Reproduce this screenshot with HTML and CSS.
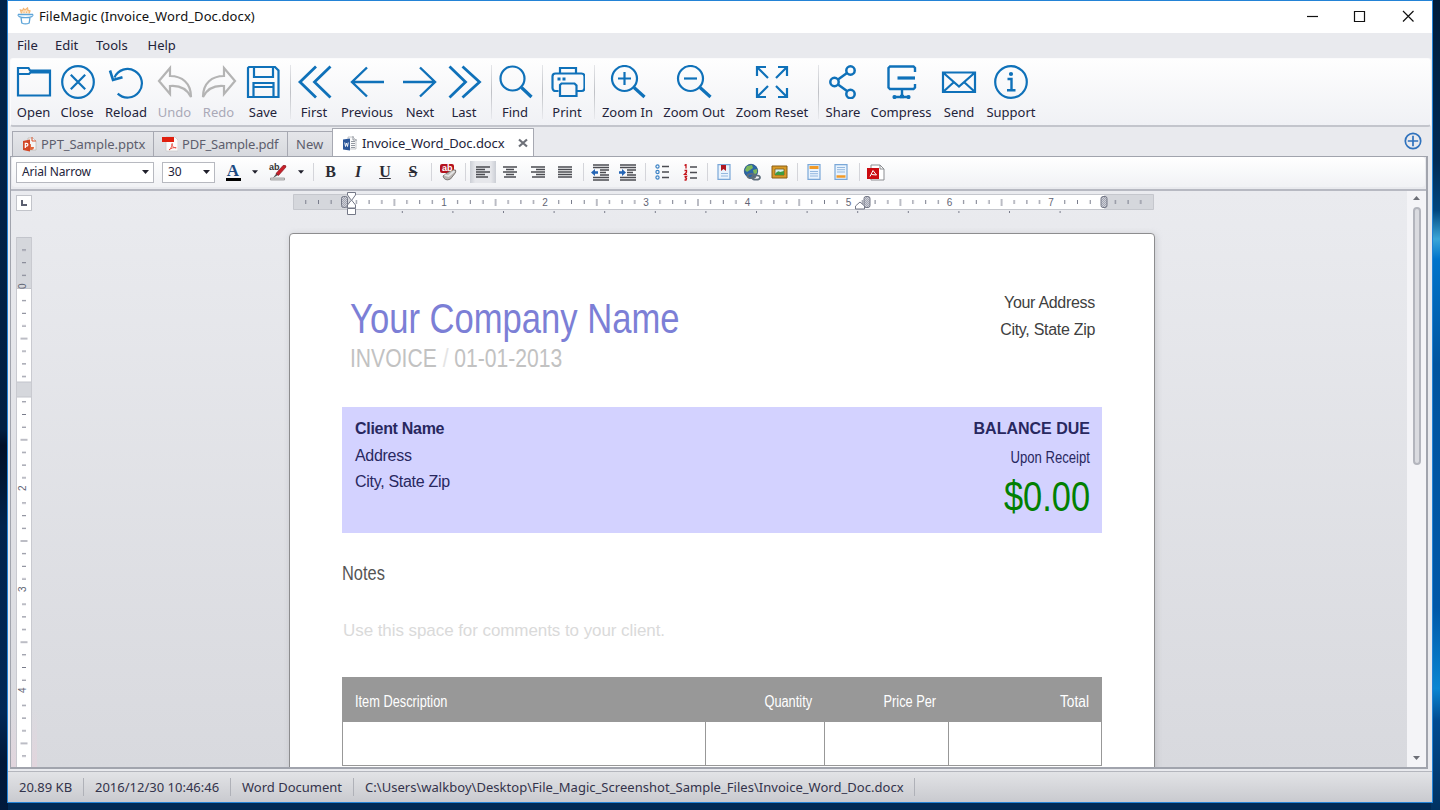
FILE: index.html
```html
<!DOCTYPE html>
<html lang="en">
<head>
<meta charset="utf-8">
<title>FileMagic</title>
<link rel="stylesheet" href="styles.css">
</head>
<body>
<svg width="0" height="0" class="defs">
  <defs>
    <symbol id="sheet-ppt" viewBox="0 0 16 16"><path d="M6 2h5l3 3v9H6z" fill="#f4f4f4" stroke="#b9b4b0" stroke-width=".7"/><path d="M10 1v4h4" fill="none" stroke="#d9532c"/><path d="M9 8a3 3 0 1 0 3 3H9z" fill="#e0663c"/><path d="M1 5l7-1.500v12L1 14z" fill="#d24726"/><path d="M3.300 12V7.300h1.200a1.400 1.400 0 0 1 0 2.800H3.300" fill="none" stroke="#fff" stroke-width="1.200"/></symbol>
    <symbol id="sheet-pdf" viewBox="0 0 16 16"><path d="M4 1h9l3 3v11H4z" fill="#fbfbfb" stroke="#c9c9c9" stroke-width=".7"/><path d="M0 1h12v5H0z" fill="#e0200f"/><path d="M7 14c2-1.500 3.500-4.500 3.200-6.500-1.200 2 1.200 4.500 4 4.300-2.500-.7-5 .3-7.200 2.200z" fill="none" stroke="#e8463a" stroke-width=".9"/></symbol>
    <symbol id="sheet-doc" viewBox="0 0 16 16"><path d="M6 2h5l3 3v9H6z" fill="#fafafa" stroke="#a9adb3" stroke-width=".7"/><path d="M11 1v4h4M9 6.500h4M9 8.500h4M9 10.500h4M9 12.500h4" fill="none" stroke="#9499a1"/><path d="M1 4.500l7-1v12l-7-1z" fill="#2b579a"/><path d="M2.700 7.500l.8 4 1-3.500 1 3.500.8-4" fill="none" stroke="#fff" stroke-width=".9"/></symbol>
    <symbol id="caret" viewBox="0 0 7 4"><path d="M0 0h7L3.500 4z" fill="#1f1f2b"/></symbol>
  </defs>
</svg>
<div class="window">
  <header class="titlebar">
    <svg class="logo" width="17" height="18" viewBox="0 0 17 18" fill="none"><path d="M4.500 6.500L3.500 3l2 .7L6.500 1.500 8 3l2.500-2 .5 2.500 2 .5-1 2.500" fill="#fde3c4" stroke="#f5b877" stroke-width="1.300"/><path d="M7 6V4.500M9.500 6V4.500" stroke="#f5b877"/><path d="M1 7.500h15M2 9.500c3 1.500 10 1.500 13 0M4 10.500l.8 5.500c2 1 5.400 1 7.400 0l.8-5.500" stroke="#5ea5d9" stroke-width="1.300"/><path d="M1 7.500v1.300l1.500 1M16 7.500v1.300l-1.500 1" stroke="#5ea5d9"/></svg>
    <span class="title">FileMagic (Invoice_Word_Doc.docx)</span>
    <svg class="controls" width="108" height="14" viewBox="0 0 108 14" fill="none" stroke="#111" stroke-width="1.200"><path d="M0 7.500h11"/><path d="M47.500 2.500H57.500v10H47.500z"/><path d="M96 2l10.500 10.500M106.500 2L96 12.500"/></svg>
  </header>
  <nav class="menu"><span>File</span><span>Edit</span><span>Tools</span><span>Help</span></nav>

  <div class="toolbar">
    <div class="tool"><svg width="36" height="34" viewBox="0 0 36 34"><path d="M2 30.500V3h10.500l1.500 2.500h20v25zM2 9h11l1.500-1.500H34"/></svg><span>Open</span></div>
    <div class="tool"><svg width="36" height="34" viewBox="0 0 36 34"><circle cx="19" cy="17" r="15.800"/><path d="M11.800 9.800l14.400 14.400M26.200 9.800L11.800 24.200"/></svg><span>Close</span></div>
    <div class="tool"><svg width="36" height="34" viewBox="0 0 36 34"><path d="M9.700 28.600A14.300 14.300 0 1 0 6.500 12.500"/><path d="M2 5.500l3 9.500 9.500-2.800" stroke-width="2.600"/></svg><span>Reload</span></div>
    <div class="tool off"><svg width="36" height="34" viewBox="0 0 36 34"><path d="M2 16L13 3v8c12 0 21 7 21 21-4-8-10-12-21-11v8z"/></svg><span>Undo</span></div>
    <div class="tool off"><svg width="36" height="34" viewBox="0 0 36 34"><path d="M34 16L23 3v8C11 11 2 18 2 32c4-8 10-12 21-11v8z"/></svg><span>Redo</span></div>
    <div class="tool"><svg width="36" height="34" viewBox="0 0 36 34"><path d="M4 2h26l3.500 3.500V32H3V3zM9 2v10h19V2M8.500 32V18h20v14M9 22h19"/></svg><span>Save</span></div>
    <i class="rule"></i>
    <div class="tool"><svg width="36" height="34" viewBox="0 0 36 34"><path d="M20 1.500L4 17l16 15.500M34.500 1.500L18.500 17l16 15.500" stroke-width="2.800"/></svg><span>First</span></div>
    <div class="tool"><svg width="36" height="34" viewBox="0 0 36 34"><path d="M18 2.500L3 17l15 14.500M3 17h32" stroke-width="2.400"/></svg><span>Previous</span></div>
    <div class="tool"><svg width="36" height="34" viewBox="0 0 36 34"><path d="M18 2.500L33 17 18 31.500M33 17H1" stroke-width="2.400"/></svg><span>Next</span></div>
    <div class="tool"><svg width="36" height="34" viewBox="0 0 36 34"><path d="M3.500 1.500L19.500 17l-16 15.500M16.500 1.500L33.500 17l-17 15.500" stroke-width="2.800"/></svg><span>Last</span></div>
    <i class="rule"></i>
    <div class="tool"><svg width="36" height="34" viewBox="0 0 36 34"><circle cx="15.500" cy="13.500" r="12"/><path d="M24.500 22.500l10 9.500" stroke-width="3.200"/></svg><span>Find</span></div>
    <i class="rule"></i>
    <div class="tool"><svg width="36" height="34" viewBox="0 0 36 34"><path d="M11 8.500V3h16v5.500M9.500 26H6.500a3 3 0 0 1-3-3V11.500a3 3 0 0 1 3-3h26a3 3 0 0 1 3 3V23a3 3 0 0 1-3 3H28M12.500 18.500h13l2 2v10.500H11V20z"/><path d="M8.500 14h3M13.500 14h3" stroke-width="3"/></svg><span>Print</span></div>
    <i class="rule"></i>
    <div class="tool"><svg width="36" height="34" viewBox="0 0 36 34"><circle cx="14.500" cy="13.500" r="12.500"/><path d="M8 13.500h13M14.500 7v13"/><path d="M24 22.500l10.500 9.500" stroke-width="3.200"/></svg><span>Zoom In</span></div>
    <div class="tool"><svg width="36" height="34" viewBox="0 0 36 34"><circle cx="14.500" cy="13.500" r="12.500"/><path d="M8 13.500h13"/><path d="M24 22.500l10.500 9.500" stroke-width="3.200"/></svg><span>Zoom Out</span></div>
    <div class="tool"><svg width="36" height="34" viewBox="0 0 36 34"><path d="M3 11V2h9M3 2l11 11M24 2h9v9M33 2L22 13M3 23v9h9M3 32l11-11M24 32h9v-9M33 32L22 21"/></svg><span>Zoom Reset</span></div>
    <i class="rule"></i>
    <div class="tool"><svg width="36" height="34" viewBox="0 0 36 34"><g stroke-width="2.500"><circle cx="9.500" cy="17" r="4.200"/><circle cx="25.500" cy="5.500" r="4.200"/><circle cx="25.500" cy="29" r="4.200"/><path d="M13 14.500l9-6.500M13 19.500l9 6.500"/></g></svg><span>Share</span></div>
    <div class="tool"><svg width="36" height="34" viewBox="0 0 36 34"><path d="M32 7V3l-1.500-1.500H7L5.500 3v19.500L7 24h23.500l1.500-1.500V19M19 24v7.500M10 32h17" stroke-width="2.400"/><path d="M14.500 13H32" stroke-width="3.200"/><circle cx="11.500" cy="32" r="1"/><circle cx="25.500" cy="32" r="1"/><path d="M17 31.500h4" stroke-width="3.400"/></svg><span>Compress</span></div>
    <div class="tool"><svg width="36" height="34" viewBox="0 0 36 34"><path d="M2 7.500h32v19.500H2zM2 7.500l16 14 16-14M2 27l11-10M34 27L23 17"/></svg><span>Send</span></div>
    <div class="tool"><svg width="36" height="34" viewBox="0 0 36 34"><circle cx="18" cy="17" r="15.800"/><path d="M14.500 14h4V25M14 25.200h8.500" stroke-width="2.400"/><circle cx="18" cy="9" r="1" stroke-width="2.200"/></svg><span>Support</span></div>
  </div>

  <div class="tabs">
    <div class="tab ppt"><svg width="16" height="16"><use href="#sheet-ppt"/></svg><span>PPT_Sample.pptx</span></div>
    <div class="tab pdf"><svg width="16" height="16"><use href="#sheet-pdf"/></svg><span>PDF_Sample.pdf</span></div>
    <div class="tab new"><span>New</span></div>
    <div class="tab active"><svg width="16" height="16"><use href="#sheet-doc"/></svg><span>Invoice_Word_Doc.docx</span><svg class="x" width="10" height="10" viewBox="0 0 10 10"><path d="M1 1.500l8 7M9 1.500l-8 7" stroke="#6d7078" stroke-width="2.200"/></svg></div>
    <svg class="add" width="18" height="18" viewBox="0 0 18 18" fill="none" stroke="#2f72bd" stroke-width="1.700"><circle cx="9" cy="9" r="7.700"/><path d="M3.800 9h10.400M9 3.800v10.400"/></svg>
  </div>

  <div class="panel">
    <div class="format">
      <div class="select font"><span>Arial Narrow</span><svg width="7" height="4"><use href="#caret"/></svg></div>
      <div class="select size"><span>30</span><svg width="7" height="4"><use href="#caret"/></svg></div>
      <div class="icons">
        <b class="glyph color">A</b>
        <svg width="6" height="4"><use href="#caret"/></svg>
        <span class="mark"><svg width="18" height="18" viewBox="0 0 18 18"><path d="M1.500 15h14v2h-14z" fill="#d8d8d8" stroke="#888" stroke-width=".7"/><path d="M4 15l4-5.500 2 2z" fill="#555"/><path d="M7 10.500L14 2.500q3.500-.8 3 1.500l-7.500 8.500z" fill="#c8202a" stroke="#7d141b" stroke-width=".6"/></svg><small>ab</small></span>
        <svg width="6" height="4"><use href="#caret"/></svg>
        <i></i>
        <b class="glyph">B</b><b class="glyph it">I</b><b class="glyph un">U</b><b class="glyph st">S</b>
        <i></i>
        <span class="erase"><svg width="18" height="18" viewBox="0 0 18 18"><rect x="1" y="1" width="14" height="9" rx="2" fill="#b5121d"/><path d="M4 13l4-3q5-4 8.500-3 1 2-1 4l-4 5q-3 1.500-5 .5-2-1-2.500-3.500z" fill="#b9b5b2" stroke="#696461" stroke-width=".8"/><path d="M5.500 12l4 1 6-5" stroke="#e4e4e4" fill="none" stroke-width="1.800"/></svg><small>ab</small></span>
        <i></i>
        <span class="pressed"><svg width="14" height="12" viewBox="0 0 14 12"><path d="M0 1h14M0 3.500h9M0 6h14M0 8.500h9M0 11h12"/></svg></span>
        <svg width="14" height="12" viewBox="0 0 14 12"><path d="M0 1h14M3 3.500h8M0 6h14M3 8.500h8M1 11h12"/></svg>
        <svg width="14" height="12" viewBox="0 0 14 12"><path d="M0 1h14M5 3.500h9M0 6h14M5 8.500h9M1 11h13"/></svg>
        <svg width="14" height="12" viewBox="0 0 14 12"><path d="M0 1h14M0 3.500h14M0 6h14M0 8.500h14M0 11h14"/></svg>
        <i></i>
        <svg width="18" height="17" viewBox="0 0 18 17"><path d="M2 1h16M2 3.500h16M9 6h9M9 8.500h6M9 11h9M2 13.500h16M2 16h16"/><path d="M0 8.500l4-3.500v2.300h3v2.400H4V12z" fill="#2465b5" stroke="none"/></svg>
        <svg width="18" height="17" viewBox="0 0 18 17"><path d="M2 1h16M2 3.500h16M9 6h9M9 8.500h6M9 11h9M2 13.500h16M2 16h16"/><path d="M8 8.500L4 5v2.300H1v2.400h3V12z" fill="#2465b5" stroke="none"/></svg>
        <i></i>
        <svg width="14" height="16" viewBox="0 0 14 16"><path d="M7 2.500h7M7 8h7M7 13.500h7"/><g fill="none" stroke="#3d84c6" stroke-width="1.200"><circle cx="2.500" cy="2.500" r="1.600"/><circle cx="2.500" cy="8" r="1.600"/><circle cx="2.500" cy="13.500" r="1.600"/></g></svg>
        <svg width="14" height="17" viewBox="0 0 14 17"><path d="M7 3h7M7 8.500h7M7 14h7"/><path d="M1.500 1.500L3 .5v4M1.500 6.500h2v1.800l-2 2h2.500M1.500 12.500h2l-1 1.300 1 .7-.5 1.500H1.500" fill="none" stroke="#c5161d" stroke-width="1.300"/></svg>
        <i></i>
        <svg width="14" height="16" viewBox="0 0 14 16"><path d="M1 .7h12v14.600H1z" fill="#e9f3fd" stroke="#7aa7d8" stroke-width="1.200"/><path d="M4 1h5v6L6.500 5 4 7z" fill="#b01722" stroke="none"/><path d="M4 9.500h7M4 12h7" stroke="#94b8df" stroke-width="1"/></svg>
        <svg width="18" height="18" viewBox="0 0 18 18"><circle cx="8" cy="8" r="6.700" fill="#2b66a8" stroke="#23507e" stroke-width=".8"/><path d="M4 3l5-1 1 3-3 2-3 2-2-2zM10 7l4-1v4l-3 2z" fill="#7db85b" stroke="none"/><g fill="none" stroke="#5f6f7c" stroke-width="1.800"><ellipse cx="8.500" cy="13" rx="4" ry="2.200"/><ellipse cx="13" cy="14.500" rx="4" ry="2.200"/></g></svg>
        <svg width="17" height="14" viewBox="0 0 17 14"><path d="M1 1h15v12H1z" fill="#d89a26" stroke="#885d16" stroke-width="1"/><path d="M4 4h9v6H4z" fill="#d5f0ee" stroke="#7c591a" stroke-width=".8"/><path d="M4 9q3-4 5-2l4-1v4H4z" fill="#3e9b42" stroke="none"/></svg>
        <i></i>
        <svg width="14" height="16" viewBox="0 0 14 16"><path d="M1 .7h12v14.600H1z" fill="#e9f3fd" stroke="#7aa7d8" stroke-width="1.200"/><path d="M2.500 3.500h9" stroke="#f09a28" stroke-width="3"/><path d="M3 7.500h8M3 9.700h8M3 12h8" stroke="#94b8df" stroke-width="1"/></svg>
        <svg width="14" height="16" viewBox="0 0 14 16"><path d="M1 .7h12v14.600H1z" fill="#e9f3fd" stroke="#7aa7d8" stroke-width="1.200"/><path d="M2.500 12.500h9" stroke="#f09a28" stroke-width="2.500"/><path d="M3 3.500h8M3 5.700h8M3 8h8" stroke="#94b8df" stroke-width="1"/></svg>
        <i></i>
        <svg width="18" height="17" viewBox="0 0 18 17"><path d="M4 1h9l4 4v11H4z" fill="#fff" stroke="#8b8d91" stroke-width="1"/><path d="M13 1v4h4" fill="none" stroke="#8b8d91" stroke-width="1"/><path d="M0 4h12v11H0z" fill="#cb0a10" stroke="none"/><path d="M3 12.500l3-6 3.500 4.500-5-.5" fill="none" stroke="#fff" stroke-width="1"/></svg>
      </div>
    </div>

    <div class="viewport">
      <div class="left">
        <div class="tabstop"><svg width="6" height="6" viewBox="0 0 6 6"><path d="M1 0v5h5" fill="none" stroke="#5b5f70" stroke-width="2"/></svg></div>
        <svg class="vruler" width="16" height="530" viewBox="0 0 16 530">
          <defs><pattern id="vt" patternUnits="userSpaceOnUse" x="0" y="51" width="16" height="101.200"><path d="M6 12.600h4M6 25.300h4M6 38h4M4.500 50.600h7M6 63.200h4M6 75.900h4M6 88.500h4" stroke="#797c8b"/></pattern></defs>
          <path d="M0 0h16v530H0z" fill="#fff"/><path d="M.5.500h15v51H.5zM.5 145h15v15H.5z" fill="#d5d7dc" stroke="#c2c4cb"/>
          <path d="M0 6h16v139H0zM0 160h16v370H0z" fill="url(#vt)"/><path d="M.5 0v530M15.500 0v530" stroke="#c9cad0"/>
          <g class="num"><text transform="translate(10 52) rotate(-90)">0</text><text transform="translate(10 254) rotate(-90)">2</text><text transform="translate(10 355) rotate(-90)">3</text><text transform="translate(10 456) rotate(-90)">4</text></g>
        </svg>
      </div>
      <main class="canvas">
        <svg class="hruler" width="861" height="24" viewBox="0 0 861 24">
          <defs><pattern id="ht" patternUnits="userSpaceOnUse" x="50.800" y="0" width="101.200" height="24"><path d="M12.600 8v4M25.300 8v4M38 8v4M50.600 7v7M63.200 8v4M75.900 8v4M88.500 8v4" stroke="#797c8b"/></pattern>
          <pattern id="dots" patternUnits="userSpaceOnUse" x="84" y="0" width="50.600" height="24"><path d="M25.300 19v2" stroke="#797c8b"/></pattern>
          <pattern id="hatch" patternUnits="userSpaceOnUse" width="2" height="2"><path d="M0 0h2v2H0z" fill="#ced0d8"/><path d="M0 0h1v1H0zM1 1h1v1H1z" fill="#a3a6b2"/></pattern></defs>
          <path d="M.5 2.500h860v15H.5z" fill="#d5d7dc" stroke="#c5c7cd"/><path d="M57 3h754v14H57z" fill="#fff"/>
          <path d="M4 0h41v24H4zM62 0h799v18H62z" fill="url(#ht)"/><path d="M90 18h690v6H90z" fill="url(#dots)"/>
          <g class="num"><text x="151" y="14">1</text><text x="252" y="14">2</text><text x="353" y="14">3</text><text x="454.500" y="14">4</text><text x="555.500" y="14">5</text><text x="656.500" y="14">6</text><text x="758" y="14">7</text></g>
          <g stroke="#747887" stroke-width="1"><rect x="48.500" y="4.500" width="6" height="11" rx="2" fill="url(#hatch)"/><rect x="571" y="4.500" width="6" height="11" rx="2" fill="url(#hatch)"/><rect x="808" y="4.500" width="6" height="11" rx="2" fill="url(#hatch)"/>
          <g fill="#fff"><path d="M54.500.500h8V3l-4 5.500-4-5.500z"/><path d="M54.500 16v-3l4-5 4 5v3z"/><path d="M54.500 16.500h8v6h-8z"/><path d="M562.500 17v-3l4.500-4 4.500 4v3z"/></g></g>
        </svg>
        <article class="page">
          <section class="head">
            <div><h1 class="narrow">Your Company Name</h1><p class="sub narrow">INVOICE <em>/</em> 01-01-2013</p></div>
            <p class="addr">Your Address<br>City, State Zip</p>
          </section>
          <section class="client">
            <p class="who"><b>Client Name</b><br>Address<br>City, State Zip</p>
            <div class="due"><b>BALANCE DUE</b><span class="receipt narrow">Upon Receipt</span><span class="amount narrow">$0.00</span></div>
          </section>
          <h2 class="narrow">Notes</h2>
          <p class="note">Use this space for comments to your client.</p>
          <div class="table">
            <div class="th first"><span class="narrow">Item Description</span></div><div class="th"><span class="narrow">Quantity</span></div><div class="th"><span class="narrow">Price Per</span></div><div class="th total"><span class="narrow">Total</span></div>
            <div class="td"></div><div class="td"></div><div class="td"></div><div class="td"></div>
          </div>
        </article>
      </main>
      <div class="scroll"><svg width="7" height="4" viewBox="0 0 7 4"><path d="M0 4h7L3.500 0z" fill="#6c6e76"/></svg><div class="thumb"></div><svg class="down" width="7" height="4" viewBox="0 0 7 4"><path d="M0 0h7L3.500 4z" fill="#6c6e76"/></svg></div>
    </div>
  </div>

  <footer class="status"><span class="s1">20.89 KB</span><span class="s2">2016/12/30 10:46:46</span><span class="s3">Word Document</span><span class="s4">C:\Users\walkboy\Desktop\File_Magic_Screenshot_Sample_Files\Invoice_Word_Doc.docx</span></footer>
</div>
</body>
</html>
```
FILE: styles.css
```css
* { box-sizing: border-box; }
body {
  margin: 0; width: 1440px; height: 810px; overflow: hidden; padding-left: 7px;
  font: 13px/18px "Noto Sans", sans-serif; color: #23233a;
  background: linear-gradient(#00234a, #001f42 53%, #000f28 55%, #001733 59%, #00234d 65%, #002855 88%, #001838 94%, #001a3c) 0 0 / 8px 100% no-repeat,
    linear-gradient(#001c3a, #002b55 20%, #00467f 26%, #3aa6d8 29.500%, #0074cb 32%, #00549f 45%, #0058a8 75%, #0a86d2 85%, #004b91 89%, #003261) 100% 0 / 9px 100% no-repeat, #002a55;
}
p, h1, h2 { margin: 0; font-weight: 400; }
.defs { display: block; position: absolute; }
.window { width: 1426px; height: 803px; border: 1px solid #2383d6; background: #e9eaee; display: flex; flex-direction: column; }
.titlebar { height: 32px; background: #fff; display: flex; align-items: center; padding: 0 17px 2px 9px; flex: none; }
.title { margin-left: 5px; color: #111; flex: 1; letter-spacing: .09px; }
.menu { height: 25px; display: flex; padding: 0 0 1px 9px; align-items: center; flex: none; }
.menu span { width: 38px; }
.menu span:nth-child(2) { width: 41px; }
.menu span:nth-child(3) { width: 51.500px; }
.toolbar {
  height: 69px; margin: 0 1px 0 2px; padding: 6px 0 0 1px; flex: none;
  background: linear-gradient(#fefefe, #f0f1f5); border: 1px solid #fbfbfc; border-bottom: 2px solid #c3c5cc; border-radius: 3px;
  display: grid; grid-template-columns: 43px 44px 54px 43px 45px 44px 10px 38px 68px 38px 50px 4px 44px 10px 40px 14px 53px 80px 76px 16px 34px 82px 34px 70px;
}
.tool { display: flex; flex-direction: column; align-items: center; white-space: nowrap; gap: 4px; }
.tool svg { fill: none; stroke: #0f71b9; stroke-width: 2.200; flex: none; }
.tool.off svg { stroke: #b4b4b4; }
.tool.off { color: #aaa9b7; }
.rule { width: 1px; height: 54px; justify-self: center; background: linear-gradient(#e5e6e9, #bfc1c6 50%, #e9eaee); }
.tabs { height: 29px; display: flex; align-items: flex-end; padding: 1px 10px 0 5px; flex: none; color: #5d5e6d; }
.tab { height: 25px; border: 1px solid #a7a9b2; border-bottom: 0; margin-left: -1px; display: flex; align-items: center; background: linear-gradient(#e5e6ea, #d7d9de); white-space: nowrap; }
.ppt { width: 142px; padding-left: 9px; gap: 3px; letter-spacing: -.05px; }
.pdf { width: 135px; padding-left: 8px; gap: 4px; letter-spacing: -.2px; }
.new { width: 46px; padding-left: 8px; }
.tab.active { width: 202px; height: 28px; background: #fff; color: #23233a; padding-left: 9px; gap: 4px; letter-spacing: -.08px; }
.x { margin-left: 9px; }
.add { margin: 0 0 6px auto; }
.panel { height: 613px; margin: 0 4px 0 2px; border: 1px solid #a1a4ad; border-right-width: 2px; border-bottom-width: 2px; flex: none; display: flex; flex-direction: column; }
.format { height: 30px; margin: 0 1px 1px 1px; background: linear-gradient(#fff, #f1f2f5); border-radius: 3px; display: flex; align-items: center; padding-left: 4px; flex: none; }
.select { height: 21px; border: 1px solid #b7b9c0; background: #fff; font-size: 12px; letter-spacing: -.15px; display: flex; align-items: center; justify-content: space-between; padding: 0 4px 0 5px; }
.font { width: 138px; }
.size { width: 53px; margin-left: 8px; }
.icons { height: 24px; margin-left: 6px; display: grid; align-items: center; justify-items: center; grid-template-columns: 24px 20px 26px 20px 4px 31px 24px 30px 26px 10px 24px 10px 26px 28px 27px 28px 8px 26px 28px 8px 26px 29px 6px 28px 27px 28px 8px 26px 28px 8px 26px; }
.icons svg { stroke: #4b4c52; stroke-width: 1.300; display: block; }
.icons use { stroke: none; }
.icons i { width: 1px; height: 18px; background: #d4d5da; }
.glyph { font: bold 16px/20px "Liberation Serif", serif; color: #2b2b33; }
.color { color: #1d4a82; font-size: 17px; line-height: 14px; border-bottom: 3px solid #000; width: 15px; text-align: center; }
.it { font-style: italic; }
.un { text-decoration: underline; }
.st { text-decoration: line-through; }
.mark, .erase { position: relative; }
.mark svg, .erase svg { stroke: none; }
.mark small, .erase small { position: absolute; left: 0; top: -1px; font: bold 9px/10px "Liberation Sans", sans-serif; color: #333; }
.erase small { color: #fff; left: 3px; top: 0; }
.pressed { width: 26px; height: 22px; display: grid; place-items: center; background: linear-gradient(90deg, #cbced5, #e6e7eb 20%, #e6e7eb 80%, #cbced5); }
.viewport { height: 578px; margin-top: 1px; border-top: 2px solid #b7b9c2; background: linear-gradient(#eaebef, #d8d9de); display: flex; overflow: hidden; }
.left { width: 26px; padding: 4px 0 0 5px; flex: none; background: linear-gradient(transparent 90%, #efcfdc66); }
.tabstop { width: 16px; height: 16px; background: #fff; border: 1px solid #c2c4ca; display: grid; place-items: center; }
.vruler { display: block; margin-top: 26px; }
.num text { font: 10px "Liberation Sans", sans-serif; fill: #626575; text-anchor: middle; }
.vruler .num text { text-anchor: start; }
.canvas { flex: 1; padding-left: 256px; }
.hruler { display: block; margin-top: 1px; }
.page { width: 866px; height: 620px; margin: 17px 0 0 -4px; background: #fff; border: 1px solid #8d8d8f; border-radius: 4px; box-shadow: 1px 1px 6px #9c9da366; padding: 58px 52px 0; font: 16px/26.500px "Liberation Sans", sans-serif; letter-spacing: -.3px; }
.narrow { display: inline-block; transform: scaleX(.82); transform-origin: 0 0; white-space: nowrap; letter-spacing: 0; }
.head { display: flex; justify-content: space-between; height: 115px; padding: 0 7px 0 8px; color: #404040; }
.head > div { width: 400px; padding-top: 4px; }
h1 { display: block; font-size: 42px; line-height: 46px; color: #7c7fd6; }
h1.narrow { transform: scaleX(.824); }
.sub { display: block; font-size: 25px; line-height: 32px; color: #c2c2c2; }
.sub.narrow { transform: scaleX(.844); }
.sub em { font-style: normal; color: #e4e4e4; }
.addr { text-align: right; margin-top: -2px; }
.client { height: 126px; background: #d3d2ff; color: #28285f; display: flex; justify-content: space-between; padding: 9px 12px 0 13px; }
.who b { font-size: 16px; }
.due b { font-size: 16px; letter-spacing: 0; }
.due { display: flex; flex-direction: column; align-items: flex-end; }
.due .narrow { transform-origin: 100% 0; }
.receipt { font-size: 16px; line-height: 30px; }
.amount { font-size: 42px; line-height: 48px; color: #028002; }
h2 { font-size: 20px; line-height: 24px; margin: 28px 0 0; color: #555; }
.note { font-size: 17px; line-height: 24px; letter-spacing: -.07px; margin: 30px 0 34px 1px; color: #dadada; }
.table { display: grid; grid-template-columns: 363px 119px 124px 154px; grid-template-rows: 45px 44px; }
.th { background: #989898; color: #fff; font-size: 15.600px; line-height: 50px; text-align: right; padding-right: 12px; }
.th.first { text-align: left; padding-left: 13px; }
.th .narrow { transform-origin: 100% 0; }
.th.first .narrow { transform-origin: 0 0; }
.th.total { padding-right: 13px; }
.total .narrow { transform: scaleX(.88); }
.td { border: 1px solid #989898; border-width: 0 0 1px 1px; }
.td:last-child { border-right-width: 1px; }
.scroll { width: 19px; background: #f4f4f7; display: flex; flex-direction: column; align-items: center; padding: 5px 0 7px; }
.thumb { width: 8px; height: 258px; margin-top: 7px; border: 2px solid #b3b5bd; border-radius: 4px; background: #dadbe0; }
.down { margin-top: auto; }
.status { margin-top: 2px; height: 33px; border-top: 1px solid #b4b6bd; background: linear-gradient(#e2e3e6, #c9cacf); display: flex; align-items: center; white-space: nowrap; color: #33334b; }
.status span { border-right: 1px solid #afb1b8; padding-left: 11px; }
.s1 { width: 76px; }
.s2 { width: 147px; }
.s3 { width: 123px; }
.s4 { width: 561px; letter-spacing: .03px; }
```
